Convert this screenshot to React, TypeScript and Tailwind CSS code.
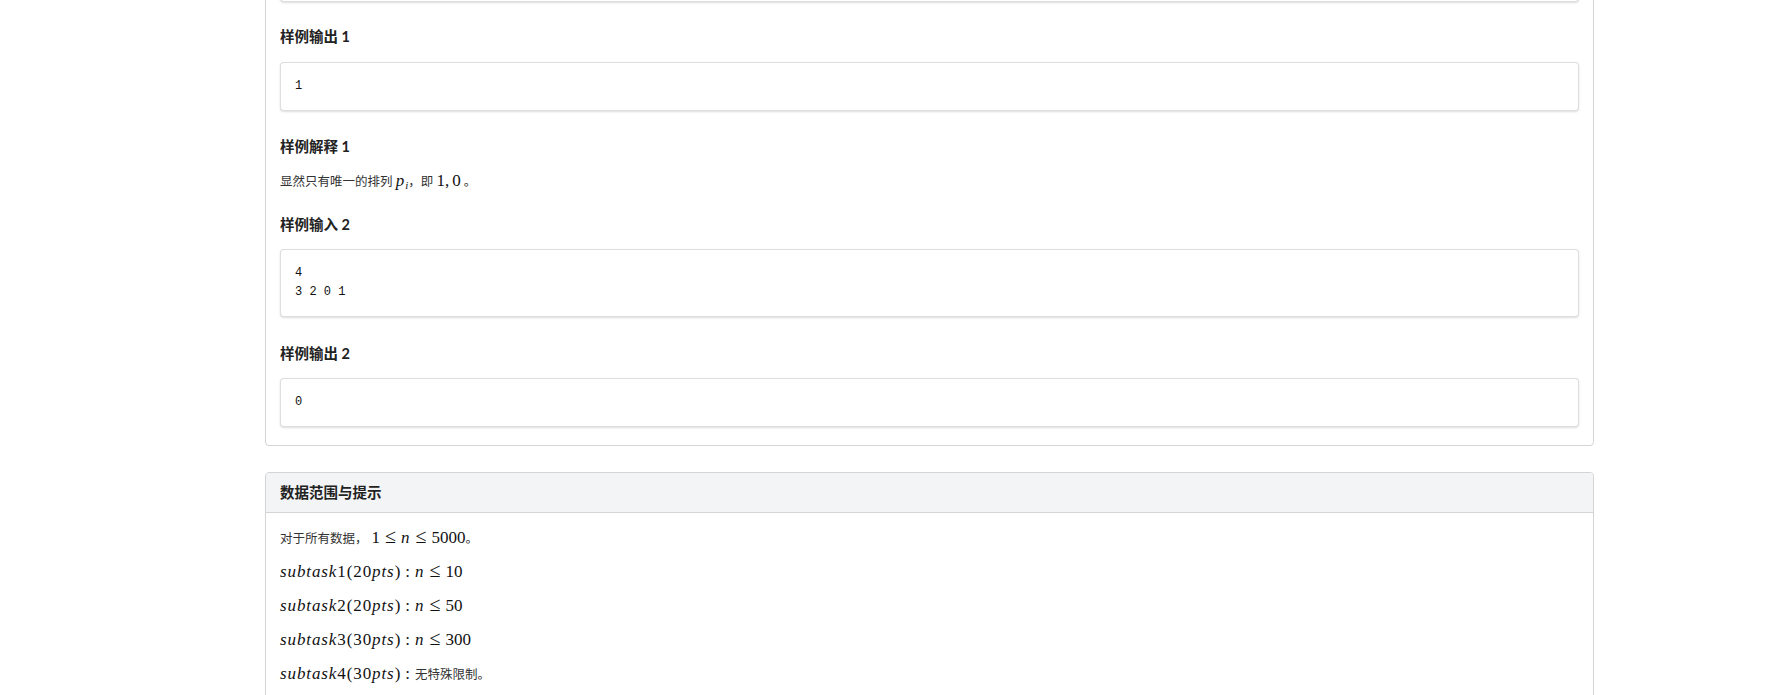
import React from "react";

const CJK = { fontFamily: '"Lato", "Noto Sans CJK SC", sans-serif' };
const MONO = { fontFamily: '"Liberation Mono", "Noto Sans CJK SC", monospace' };

function I({ children }: { children: React.ReactNode }) {
  return <span className="italic tracking-[0.9px]">{children}</span>;
}

function Math({ children }: { children: React.ReactNode }) {
  return (
    <span
      className="text-[17px] leading-none text-[#111]"
      style={{ fontFamily: '"Liberation Serif", "DejaVu Serif", serif' }}
    >
      {children}
    </span>
  );
}

function Rel({ children }: { children: React.ReactNode }) {
  return <span className="mx-[5px]">{children}</span>;
}

function Le() {
  return <span className="mx-[5px] text-[20px] leading-[0px]">≤</span>;
}

function Heading({ children, mt }: { children: React.ReactNode; mt: string }) {
  return (
    <div className={`${mt} text-[14.5px] font-bold leading-[20px] text-[#222]`} style={CJK}>
      {children}
    </div>
  );
}

function CodeBox({ lines, mt }: { lines: string[]; mt: string }) {
  return (
    <div
      className={`${mt} rounded-[4px] border border-[rgba(34,36,38,0.15)] bg-white px-[14px] py-[14px] shadow-[0_1px_2px_0_rgba(34,36,38,0.15)]`}
    >
      <pre className="m-0 text-[12px] leading-[19px] text-[#111]" style={MONO}>
        {lines.join("\n")}
      </pre>
    </div>
  );
}

function Subtask({ n, pts, children }: { n: string; pts: string; children: React.ReactNode }) {
  return (
    <p className="mb-[14px] flex h-[20px] items-baseline leading-[20px] text-[12.5px] text-[#222]" style={CJK}>
      <Math>
        <I>subtask</I>
        <span className="tracking-[0.9px]">{n}({pts}</span>
        <I>pts</I>)<Rel>:</Rel>
      </Math>
      {children}
    </p>
  );
}

export default function App() {
  return (
    <div className="h-[695px] w-[1765px] overflow-hidden bg-white">
      <div className="ml-[265px] w-[1329px]">
        {/* Samples card */}
        <div className="mt-[-62px] rounded-[4px] border border-[#d4d4d5] bg-white px-[14px] pt-[14px] pb-[18px]">
          <div className="h-[49px] rounded-[4px] border border-[rgba(34,36,38,0.15)] bg-white shadow-[0_1px_2px_0_rgba(34,36,38,0.15)]" />

          <Heading mt="mt-[25px]">样例输出 1</Heading>
          <CodeBox mt="mt-[15px]" lines={["1"]} />

          <Heading mt="mt-[26px]">样例解释 1</Heading>
          <p className="mt-[15px] h-[20px] leading-[20px] text-[12.5px] text-[#333]" style={CJK}>
            显然只有唯一的排列{" "}
            <Math>
              <I>p</I>
              <sub className="text-[11px] italic">i</sub>
            </Math>
            ，即{" "}
            <Math>
              1,<span className="ml-[3px]">0</span>
            </Math>{" "}
            。
          </p>

          <Heading mt="mt-[23px]">样例输入 2</Heading>
          <CodeBox mt="mt-[14px]" lines={["4", "3 2 0 1"]} />

          <Heading mt="mt-[27px]">样例输出 2</Heading>
          <CodeBox mt="mt-[14px]" lines={["0"]} />
        </div>

        {/* Data range card */}
        <div className="mt-[26px] rounded-[4px] border border-[#d4d4d5] bg-white">
          <div
            className="flex h-[40px] items-center rounded-t-[4px] border-b border-[#d4d4d5] bg-[#f3f4f5] px-[14px] text-[14.5px] font-bold text-[#222]"
            style={CJK}
          >
            数据范围与提示
          </div>
          <div className="px-[14px] pt-[16px]">
            <p className="mb-[14px] flex h-[20px] items-baseline leading-[20px] text-[12.5px] text-[#333]" style={CJK}>
              对于所有数据，
              <span className="ml-[4px]" />
              <Math>
                1<Le />
                <I>n</I>
                <Le />
                5000
              </Math>
              。
            </p>
            <Subtask n="1" pts="20">
              <Math>
                <I>n</I>
                <Le />
                10
              </Math>
            </Subtask>
            <Subtask n="2" pts="20">
              <Math>
                <I>n</I>
                <Le />
                50
              </Math>
            </Subtask>
            <Subtask n="3" pts="30">
              <Math>
                <I>n</I>
                <Le />
                300
              </Math>
            </Subtask>
            <Subtask n="4" pts="30">
              <span className="text-[#333]">无特殊限制。</span>
            </Subtask>
          </div>
        </div>
      </div>
    </div>
  );
}
